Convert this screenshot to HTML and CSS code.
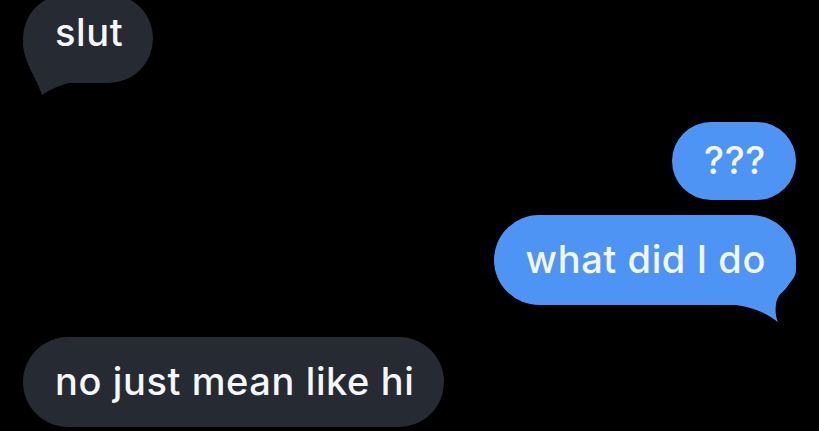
FILE: index.html
```html
<!DOCTYPE html>
<html lang="en">
<head>
  <meta charset="UTF-8">
  <title>Messages</title>
  <link rel="stylesheet" href="styles.css">
</head>
<body>

  <div class="thread">
    <div class="row row-in first">
      <div class="bubble bubble-in">
        slut
        <svg class="tail tail-in" width="60" height="60" viewBox="0 0 60 60">
          <path d="M0 0 C0 20 14 36 19 53 C28 47 40 41 54 40 L54 0 Z"/>
        </svg>
      </div>
    </div>

    <div class="row row-out second">
      <div class="bubble bubble-out short">???</div>
    </div>

    <div class="row row-out third">
      <div class="bubble bubble-out">
        what did I do
        <svg class="tail tail-out" width="60" height="64" viewBox="0 0 60 64">
          <path d="M60 0 L60 10 C60 22 42 30 40 44 C39 52 40 58 42 62 C34 56 22 48 0 45 L0 0 Z"/>
        </svg>
      </div>
    </div>

    <div class="row row-in fourth">
      <div class="bubble bubble-in">no just mean like hi</div>
    </div>
  </div>

</body>
</html>
```

FILE: styles.css
```css
html, body {
  margin: 0;
  background-color: #000;
  overflow: hidden;
}
body {
  width: 819px;
  height: 431px;
  font-family: Inter, "Noto Sans", sans-serif;
  color: #f4f6f9;
}
.thread {
  display: flex;
  flex-direction: column;
  padding: 0 23px;
}
.row {
  display: flex;
}
.row-in {
  justify-content: flex-start;
}
.row-out {
  justify-content: flex-end;
}
.first {
  margin-top: -6px;
}
.first .bubble {
  padding-top: 15px;
  padding-bottom: 28px;
}
.second {
  margin-top: 39px;
}
.third {
  margin-top: 15px;
}
.fourth {
  margin-top: 32px;
}
.bubble {
  position: relative;
  isolation: isolate;
  font-size: 38px;
  font-weight: 500;
  letter-spacing: 0.6px;
  line-height: 46px;
  padding: 21px 30px 23px 32px;
  border-radius: 45px;
  white-space: nowrap;
}
.bubble-in {
  background-color: #262a32;
}
.bubble-out {
  background-color: #4d94f5;
}
.short {
  padding-top: 15px;
  padding-bottom: 17px;
  border-radius: 40px;
}
.tail {
  position: absolute;
  z-index: -1;
}
.tail-in {
  left: 0;
  top: 48px;
}
.tail-in path {
  fill: #262a32;
}
.tail-out {
  right: 0;
  top: 45px;
}
.tail-out path {
  fill: #4d94f5;
}
```
